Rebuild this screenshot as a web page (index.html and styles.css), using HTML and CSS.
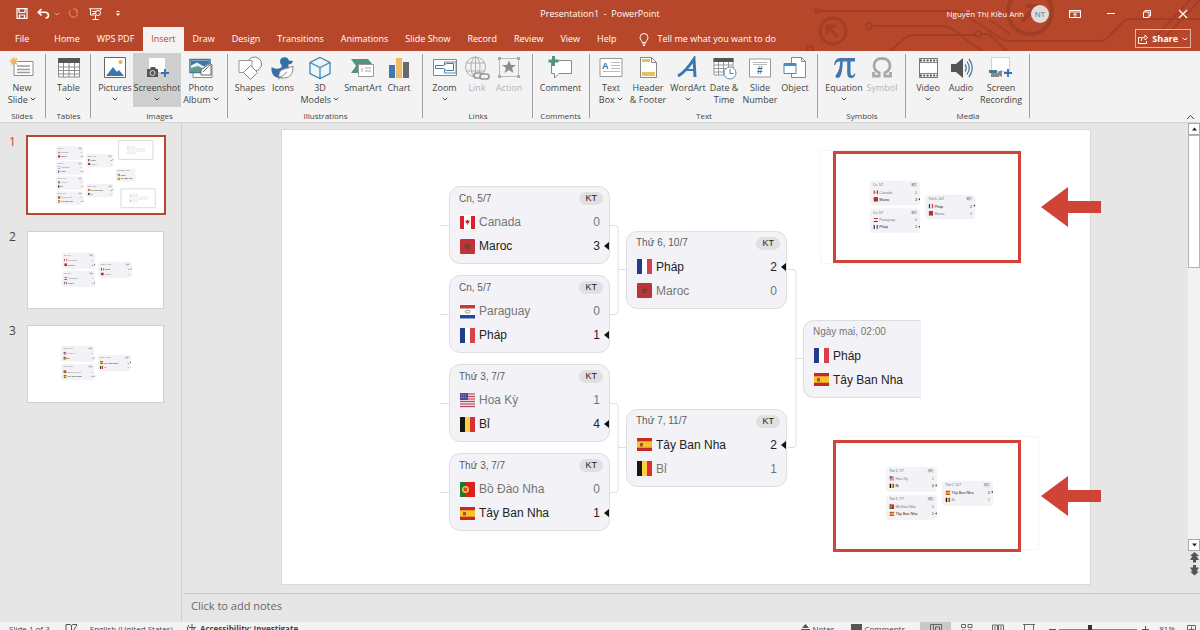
FILE: index.html
```html
<!DOCTYPE html>
<html lang="en">
<head>
<meta charset="utf-8">
<title>Presentation1 - PowerPoint</title>
<link rel="stylesheet" href="styles.css">
</head>
<body>
<svg class="defs" aria-hidden="true">
  <defs>
    <symbol id="fr" viewBox="0 0 15 15"><path fill="#fff" d="M0 0h15v15H0z"/><path fill="#1f3d8c" d="M0 0h5v15H0z"/><path fill="#d8404e" d="M10 0h5v15h-5z"/></symbol>
    <symbol id="ca" viewBox="0 0 15 15"><path fill="#fff" d="M0 0h15v15H0z"/><path fill="#d8232c" d="M0 1h4v13H0zM11 1h4v13h-4zM7.500 4.500l.9 1.200 1.300-.3-.4 2-1.500 1.300v1.300h-.6V8.700L5.700 7.400l-.4-2 1.300.3z"/></symbol>
    <symbol id="ma" viewBox="0 0 15 15"><rect width="15" height="15" rx="1" fill="#bd3338"/><path fill="none" stroke="#5c4a2e" d="M7.500 4.500l1.900 5.600-4.700-3.500h5.600l-4.700 3.500z"/></symbol>
    <symbol id="py" viewBox="0 0 15 15"><path fill="#fff" d="M0 0h15v15H0z"/><path fill="#c43a35" d="M0 1h15v3.500H0z"/><path fill="#1f4a9c" d="M0 11h15v3.500H0z"/><ellipse cx="7.500" cy="7.700" rx="2.300" ry="1.500" fill="none" stroke="#8b949b"/></symbol>
    <symbol id="us" viewBox="0 0 15 15"><path fill="#e8d5dc" d="M0 0h15v15H0z"/><path stroke="#b84a5c" stroke-width="1.200" d="M0 1h15M0 3.500h15M0 6h15M0 8.500h15M0 11h15M0 13.500h15"/><path fill="#4a4f8f" d="M0 0h8v7H0z"/><path stroke="#9a9fc8" stroke-dasharray="1 1" d="M1 2h6M1 4.500h6"/></symbol>
    <symbol id="be" viewBox="0 0 15 15"><path fill="#fbd23a" d="M0 0h15v15H0z"/><path fill="#1b1512" d="M0 0h5v15H0z"/><path fill="#dd2f33" d="M10 0h5v15h-5z"/></symbol>
    <symbol id="pt" viewBox="0 0 15 15"><path fill="#dd1f1d" d="M0 0h15v15H0z"/><path fill="#1d7a34" d="M0 0h5.500v15H0z"/><circle cx="5.500" cy="7.500" r="2.800" fill="#d84a2a" stroke="#f3d34a" stroke-width="1.300"/></symbol>
    <symbol id="es" viewBox="0 0 15 15"><path fill="#f6c22c" d="M0 1h15v13H0z"/><path fill="#c22a26" d="M0 1h15v3.300H0zM0 10.700h15V14H0z"/><path fill="#a9532a" d="M3 6h3v3.500H3z"/></symbol>

    <g id="mini-card">
      <rect x=".5" y=".5" width="160" height="77" rx="10" fill="#f3f3f7" stroke="#e9e9ee"/>
      <rect x="131" y="6" width="23" height="13" rx="6" fill="#e0e0e4"/>
      <text x="135" y="16" font-size="10" fill="#444">KT</text>
    </g>
    <g id="mini-win"><path fill="#222" d="M161 55v7l-5-3.500z"/></g>
    <g id="pair-a" font-family="Liberation Sans, sans-serif" font-size="12">
      <use href="#mini-card"/>
      <text x="10" y="16" font-size="10" fill="#666">Cn, 5/7</text>
      <use href="#ca" x="11" y="29" width="15" height="15"/><text x="30" y="41" fill="#777">Canada</text><text x="145" y="41" fill="#777">0</text>
      <use href="#ma" x="11" y="52" width="15" height="15"/><text x="30" y="64" fill="#222">Maroc</text><text x="145" y="64" fill="#222">3</text><use href="#mini-win"/>
      <g transform="translate(0 89)"><use href="#mini-card"/>
      <text x="10" y="16" font-size="10" fill="#666">Cn, 5/7</text>
      <use href="#py" x="11" y="29" width="15" height="15"/><text x="30" y="41" fill="#777">Paraguay</text><text x="145" y="41" fill="#777">0</text>
      <use href="#fr" x="11" y="52" width="15" height="15"/><text x="30" y="64" fill="#222">Pháp</text><text x="145" y="64" fill="#222">1</text><use href="#mini-win"/></g>
      <g transform="translate(178 45)"><use href="#mini-card"/>
      <text x="10" y="16" font-size="10" fill="#666">Thứ 6, 10/7</text>
      <use href="#fr" x="11" y="29" width="15" height="15"/><text x="30" y="41" fill="#222">Pháp</text><text x="145" y="41" fill="#222">2</text><use href="#mini-win" y="-24"/>
      <use href="#ma" x="11" y="52" width="15" height="15"/><text x="30" y="64" fill="#777">Maroc</text><text x="145" y="64" fill="#777">0</text></g>
    </g>
    <g id="pair-b" font-family="Liberation Sans, sans-serif" font-size="12">
      <use href="#mini-card"/>
      <text x="10" y="16" font-size="10" fill="#666">Thứ 3, 7/7</text>
      <use href="#us" x="11" y="29" width="15" height="15"/><text x="30" y="41" fill="#777">Hoa Kỳ</text><text x="145" y="41" fill="#777">1</text>
      <use href="#be" x="11" y="52" width="15" height="15"/><text x="30" y="64" fill="#222">Bỉ</text><text x="145" y="64" fill="#222">4</text><use href="#mini-win"/>
      <g transform="translate(0 89)"><use href="#mini-card"/>
      <text x="10" y="16" font-size="10" fill="#666">Thứ 3, 7/7</text>
      <use href="#pt" x="11" y="29" width="15" height="15"/><text x="30" y="41" fill="#777">Bồ Đào Nha</text><text x="145" y="41" fill="#777">0</text>
      <use href="#es" x="11" y="52" width="15" height="15"/><text x="30" y="64" fill="#222">Tây Ban Nha</text><text x="145" y="64" fill="#222">1</text><use href="#mini-win"/></g>
      <g transform="translate(178 45)"><use href="#mini-card"/>
      <text x="10" y="16" font-size="10" fill="#666">Thứ 7, 11/7</text>
      <use href="#es" x="11" y="29" width="15" height="15"/><text x="30" y="41" fill="#222">Tây Ban Nha</text><text x="145" y="41" fill="#222">2</text><use href="#mini-win" y="-24"/>
      <use href="#be" x="11" y="52" width="15" height="15"/><text x="30" y="64" fill="#777">Bỉ</text><text x="145" y="64" fill="#777">1</text></g>
    </g>
    <symbol id="caret" viewBox="0 0 6 4"><path fill="none" stroke="currentColor" d="M.7.8L3 3 5.300.8"/></symbol>
  </defs>
</svg>

<div class="app">
  <header class="top">
    <svg class="circuit" viewBox="0 0 400 51" aria-hidden="true" fill="none" stroke="#a33e26" stroke-width="2">
      <circle cx="17" cy="11" r="2"/><path d="M19 11h132M70 26h73q8 1 16 8l10 8q8 5 14 9M90 51l14-12q4-4 12-4h60"/>
      <circle cx="69" cy="26" r="3"/><circle cx="178" cy="34" r="3"/><circle cx="33" cy="31" r="13" stroke-width="3"/>
      <path stroke-width="3" d="M38 37L27 26M27 34v-8h9"/>
      <path d="M181 34h8l18 17M152 11q10 0 18 7l30 20q4 3 12 3h88q5 0 9-5l15-15q3-2 8-2h68M190 20l20 14M356 36l34-36M366 36l34-36"/>
      <circle cx="230" cy="12" r="22" stroke-width="4"/><path stroke-width="4" d="M222 21l14-14M226 6h11v10"/><circle cx="10" cy="49" r="3"/>
    </svg>
    <div class="titlebar">
      <div class="quick">
        <button aria-label="Save"><svg width="12" height="11" viewBox="0 0 12 11"><path fill="none" stroke="#fff" stroke-width="1.200" d="M1 .7h10v9.600H1zM3 1v3.500h6V1M3.500 10V7h5v3"/></svg></button>
        <button class="undo" aria-label="Undo"><svg width="13" height="11" viewBox="0 0 13 11"><path fill="none" stroke="#fff" stroke-width="1.600" d="M4.500 1L1.200 4.200l3.300 3.200M1.500 4.200h6.700q3.300.3 3.300 3T8.500 10"/></svg><svg width="6" height="4" class="pale"><use href="#caret"/></svg></button>
        <button class="redo" aria-label="Redo"><svg width="11" height="11" viewBox="0 0 11 11"><path fill="none" stroke="#ee6a50" stroke-width="1.500" d="M6 1.200h3.500v3.500M9 1.500A4.200 4.200 0 1 1 3.300 2.500"/></svg></button>
        <button aria-label="Start from beginning"><svg width="13" height="12" viewBox="0 0 13 12"><path fill="none" stroke="#fff" d="M0 .8h13M1.500 1v6h4M11.500 1v1.500M3.500 3.500h4M3.500 5.500h3M6.500 7v4M3.500 11.500h6"/><circle cx="9" cy="5" r="2.500" fill="none" stroke="#fff"/></svg></button>
        <button class="more" aria-label="Customize Quick Access Toolbar"><svg width="6" height="6" viewBox="0 0 6 6"><path fill="#fff" d="M1.500 0h3v1h-3zM.8 2.500h4.400L3 5z"/></svg></button>
      </div>
      <div class="doc">Presentation1 &nbsp;-&nbsp; PowerPoint</div>
      <div class="account">
        <span>Nguyễn Thị Kiều Anh</span><span class="avatar">NT</span>
        <button aria-label="Ribbon Display Options"><svg width="12" height="10" viewBox="0 0 12 10"><path fill="none" stroke="#fff" d="M.5 1.500h11v7H.5zM.5 3h11M6 8V4.500M4.200 6L6 4.300 7.800 6"/></svg></button>
        <button aria-label="Minimize"><svg width="10" height="10" viewBox="0 0 10 10"><path stroke="#fff" d="M1 4.500h8"/></svg></button>
        <button aria-label="Restore"><svg width="10" height="10" viewBox="0 0 10 10"><path fill="none" stroke="#fff" d="M1.500 3h5.500v5.500H1.500zM3 3V1.500h5.500V7H7"/></svg></button>
        <button aria-label="Close"><svg width="10" height="10" viewBox="0 0 10 10"><path stroke="#fff" stroke-width="1.200" d="M1 1l8 8M9 1L1 9"/></svg></button>
      </div>
    </div>
    <nav class="tabs">
      <button class="file">File</button><button>Home</button><button>WPS PDF</button><button class="on">Insert</button><button>Draw</button><button>Design</button><button>Transitions</button><button>Animations</button><button>Slide Show</button><button>Record</button><button>Review</button><button>View</button><button>Help</button>
      <button class="tell"><svg width="10" height="13" viewBox="0 0 10 13"><path fill="none" stroke="#fff" d="M3.200 9.500C3.200 7.500 1 7 1 4.500a4 4 0 0 1 8 0C9 7 6.800 7.500 6.800 9.500zM3.300 11h3.400M4 12.500h2"/></svg>Tell me what you want to do</button>
      <button class="share"><svg width="10" height="10" viewBox="0 0 10 10"><path fill="none" stroke="#fff" d="M3.500 3.500h-3v6h8V7M3 7q0-4 4-4V1l2.500 2.700L7 6V4.500"/></svg>Share<svg width="6" height="4"><use href="#caret"/></svg></button>
    </nav>
  </header>

  <section class="ribbon" aria-label="Insert">
    <div class="group g-slides"><div class="tools">
      <button><svg viewBox="0 0 26 24"><path fill="#fff" stroke="#8c8c8c" d="M5 5.500h19v14H5z"/><path stroke="#9c9c9c" stroke-width="1.500" d="M8 10h13M8 13.500h13M8 16.500h13"/><path stroke="#e9b660" stroke-width="1.300" d="M5 1v9M.5 5.500h9M2 2.500l6 6M8 2.500l-6 6"/></svg><span>New<br>Slide <svg class="c"><use href="#caret"/></svg></span></button></div><h2>Slides</h2></div>
    <div class="group g-tables"><div class="tools">
      <button><svg viewBox="0 0 26 24"><path fill="#fff" stroke="#8c8c8c" d="M2.500 3h21v18h-21zM2.500 11h21M2.500 14.500h21M2.500 18h21M7.500 7v14M13 7v14M18.500 7v14"/><path fill="#555" d="M2 2h22v5H2z"/></svg><span>Table<br><svg class="c"><use href="#caret"/></svg></span></button></div><h2>Tables</h2></div>
    <div class="group g-images"><div class="tools">
      <button><svg viewBox="0 0 26 24"><path fill="#fff" stroke="#666" d="M2.500 1.500h21v20h-21z"/><path fill="#3b75ad" d="M4 20l7-9 4 5 2-2 5 6z"/><circle cx="18.500" cy="6" r="2" fill="#e9b14e"/></svg><span>Pictures<br><svg class="c"><use href="#caret"/></svg></span></button>
      <button class="active"><svg viewBox="0 0 26 24"><path fill="#fff" d="M5 2h16v14H5z"/><path fill="#555" d="M3 13h3l1-2h4l1 2h2v8H3z"/><circle cx="8.500" cy="17" r="2.500" fill="#555" stroke="#ddd"/><path stroke="#2f72b5" stroke-width="1.800" d="M21 13v8M17 17h8"/></svg><span>Screenshot<br><svg class="c"><use href="#caret"/></svg></span></button>
      <button><svg viewBox="0 0 26 24"><path fill="#fff" stroke="#888" d="M5 8.500h19v13H5z"/><path fill="#e8f1f5" stroke="#4d7890" stroke-width="1.500" d="M2 3.500h20v13H2z"/><path fill="#3f78a8" d="M3 4.500h18v3l-5 3-7-4-6 3z"/><path fill="#5e9c8c" d="M3 12l7-2 6 3-2 3H3z"/><path fill="#fff" stroke="#666" d="M13 19v-5l8-6h2v11zM15 16l7-7"/></svg><span>Photo<br>Album <svg class="c"><use href="#caret"/></svg></span></button></div><h2>Images</h2></div>
    <div class="group g-illus"><div class="tools">
      <button><svg viewBox="0 0 26 24"><circle cx="17.500" cy="8" r="7" fill="#fff" stroke="#5f91ad"/><path fill="#fff" stroke="#999" d="M2 4.500h13v12H2z"/><path fill="#fff" stroke="#6a8aa0" d="M13.500 9.500l7 7-7 7-7-7z"/></svg><span>Shapes<br><svg class="c"><use href="#caret"/></svg></span></button>
      <button><svg viewBox="0 0 26 24"><path fill="#356fa8" d="M10 5.500A4.500 4.500 0 0 1 18.800 4.500L23 5q-.5 3-4.500 3.500-.7 2 1 3.500 2 2 1.500 4l-8 6q-5 1-9-2-3-3-2.500-9 3 2.500 7.500 1.500 3.500-1 2.500-3.500-1.500-1.500-1.500-3.500z"/><path fill="#fff" stroke="#8a8a8a" d="M9 21.500q-1-7 5-8.500 5-1 9-3 .5 11.500-8.500 12-3.500.5-4.500-1.500M8 23.500l9-7.500"/></svg><span>Icons</span></button>
      <button><svg viewBox="0 0 26 24"><path fill="#eef6fa" stroke="#3f87b5" stroke-width="1.300" d="M13 1.500l10 5v11l-10 5-10-5v-11zM3 6.500l10 5 10-5M13 11.500v11"/></svg><span>3D<br>Models <svg class="c"><use href="#caret"/></svg></span></button>
      <button><svg viewBox="0 0 26 24"><path fill="#4f9380" d="M1 3h17l5 6h-9v8H1l5-7z"/><path fill="#fff" stroke="#999" d="M8.500 8.500h15v12h-15z"/><path stroke="#c4c4c4" stroke-width="1.300" d="M11 13h2M15 12h6M15 15h6M11 15h2"/></svg><span>SmartArt</span></button>
      <button><svg viewBox="0 0 26 24"><path fill="#3f78b5" d="M3 9h6v13H3z"/><path fill="#edbc66" d="M10 2h6v20h-6z"/><path fill="#6a6a6a" d="M17 6h6v16h-6z"/></svg><span>Chart</span></button></div><h2>Illustrations</h2></div>
    <div class="group g-links"><div class="tools">
      <button><svg viewBox="0 0 26 24"><path fill="#fff" stroke="#888" d="M1.500 3.500h23v16h-23z"/><path fill="#fff" stroke="#5b8aac" d="M12.500 6h11.500v11H12.500z"/><path fill="#fff" stroke="#4a7898" d="M3.500 9.500h8l3-2h7v7h-7l-3-2h-8z"/></svg><span>Zoom<br><svg class="c"><use href="#caret"/></svg></span></button>
      <button disabled><svg viewBox="0 0 26 24"><g fill="none" stroke="#b0b0b0"><circle cx="11.500" cy="11" r="10"/><ellipse cx="11.500" cy="11" rx="4.500" ry="10"/><path d="M2 7h19M2 15h19M11.500 1v20"/></g><g fill="#f1f1f1" stroke="#989898" stroke-width="1.700"><rect x="10" y="17" width="9" height="5" rx="2.500"/><rect x="16" y="18" width="9" height="5" rx="2.500"/></g></svg><span>Link</span></button>
      <button disabled><svg viewBox="0 0 26 24"><path fill="none" stroke="#bbb" d="M3.500 2.500h19v18h-19z"/><path fill="#aaa" d="M2 1h3v3H2zM21 1h3v3h-3zM2 19h3v3H2zM21 19h3v3h-3z"/><path fill="#8c8c8c" d="M13 4.500l2 4.500h5l-4 3 1.500 5-4.500-3-4.500 3 1.500-5-4-3h5z"/></svg><span>Action</span></button></div><h2>Links</h2></div>
    <div class="group g-comments"><div class="tools">
      <button><svg viewBox="0 0 26 24"><path fill="#fff" stroke="#888" d="M3.500 4.500h20v13H11l-4.500 4.500v-4.500h-3z"/><path stroke="#4f9380" stroke-width="3" d="M5.500 0v10M.5 5h10"/></svg><span>Comment</span></button></div><h2>Comments</h2></div>
    <div class="group g-text"><div class="tools">
      <button><svg viewBox="0 0 26 24"><path fill="#fff" stroke="#999" d="M2 2.500h22v18H2z"/><text class="glyph" x="4" y="13" font-size="9" font-weight="700" fill="#3a6f9f">A</text><path stroke="#bbb" d="M13 6.500h9M13 9.500h9M13 12.500h9M5 15.500h17"/></svg><span>Text<br>Box <svg class="c"><use href="#caret"/></svg></span></button>
      <button><svg viewBox="0 0 26 24"><path fill="#fff" stroke="#888" d="M5.500 1.500h11l5 5v15h-16z"/><path fill="none" stroke="#888" d="M16.500 2v4.500h5"/><path fill="#edbd62" d="M7 3h8v3H7zM7 16h13v4H7z"/></svg><span>Header<br>&amp; Footer</span></button>
      <button><svg viewBox="0 0 26 24"><path fill="none" stroke="#3a76b8" stroke-width="3" d="M3 20C9 17 15 9 19 3l1 18"/><path stroke="#3a76b8" stroke-width="2" d="M9 14h11"/></svg><span>WordArt<br><svg class="c"><use href="#caret"/></svg></span></button>
      <button><svg viewBox="0 0 26 24"><path fill="#fff" stroke="#999" d="M3 3h19v16H3zM3 9h19M3 12.500h19M3 16h19M7.500 6v13M12.500 6v13M17.500 6v13"/><path fill="#555" d="M2.500 2h20v4h-20z"/><circle cx="19" cy="17" r="6" fill="#fff" stroke="#6090b5"/><path fill="none" stroke="#4f7ea6" d="M19 13v4.500h3.500"/></svg><span>Date &amp;<br>Time</span></button>
      <button><svg viewBox="0 0 26 24"><path fill="#fff" stroke="#999" d="M2.500 3h21v18h-21z"/><path stroke="#bbb" d="M6 6.500h14M6 8.500h14"/><text class="glyph" x="10" y="18" font-size="10" fill="#3a6f9f" font-weight="700">#</text></svg><span>Slide<br>Number</span></button>
      <button><svg viewBox="0 0 26 24"><path fill="#fff" stroke="#888" d="M9.500 1.500h10l4 4v16h-14zM19.500 1.500v4h4"/><path fill="#fff" stroke="#4f8ab5" d="M2 7.500h12v10H2z"/><path fill="#4f8ab5" d="M2 7h12v3H2z"/></svg><span>Object</span></button></div><h2>Text</h2></div>
    <div class="group g-symbols"><div class="tools">
      <button><svg viewBox="0 0 26 24"><path fill="#3f78b0" d="M3 9q1-7 6-7h15v3.500h-4.500v11q0 3 2 3 1.500 0 1.500-2h1.200q0 4.500-4 4.500-4 0-4-5V5.500h-4.400Q11.500 15 9.500 20q-1 2-3 2-2 0-2-2 0-1 1.500-2.500Q9 13 9.200 5.500 5 5 4.300 9z"/></svg><span>Equation<br><svg class="c"><use href="#caret"/></svg></span></button>
      <button disabled><svg viewBox="0 0 26 24"><path fill="none" stroke="#a8a8a8" stroke-width="2.700" d="M4.500 16v4.200h5.700v-3.400Q5 14.500 5 9.500 5.500 2.500 13 2.300q7.500.2 8 7.200 0 5-5.200 7.300v3.400h5.700V16"/></svg><span>Symbol</span></button></div><h2>Symbols</h2></div>
    <div class="group g-media"><div class="tools">
      <button><svg viewBox="0 0 26 24"><path fill="#fff" stroke="#777" d="M4.500 2.500h18v19h-18z"/><path stroke="#555" stroke-width="2" stroke-dasharray="2 1.300" d="M5 4.500h17M5 19.500h17"/><path stroke="#888" d="M4.500 6.500h18M4.500 17.500h18"/></svg><span>Video<br><svg class="c"><use href="#caret"/></svg></span></button>
      <button><svg viewBox="0 0 26 24"><path fill="#555" d="M3 8h5l7-6v20l-7-6H3z"/><path fill="none" stroke="#4a7da3" stroke-width="1.300" d="M17 8.500q2.500 3.500 0 7M19 5.500q4.500 6.500 0 13M21 3q6.500 9 0 18"/></svg><span>Audio<br><svg class="c"><use href="#caret"/></svg></span></button>
      <button><svg viewBox="0 0 26 24"><path fill="#fff" stroke="#aaa" stroke-dasharray="1 1" d="M3.500 1.500h18v14h-18z"/><path fill="#4a7898" d="M1 14h8v3H1z"/><path fill="#888" d="M3 17h8v4H3zM10 16l4-2v7l-4-2z"/><path stroke="#2f72b5" stroke-width="1.800" d="M20 13v8M16 17h8"/></svg><span>Screen<br>Recording</span></button></div><h2>Media</h2></div>
    <button class="collapse" aria-label="Collapse the Ribbon"><svg width="9" height="6" viewBox="0 0 9 6"><path fill="none" stroke="#444" d="M1 5l3.500-3.500L8 5"/></svg></button>
  </section>

  <main class="work">
    <aside class="thumbs" aria-label="Slides">
      <div class="thumb selected"><span>1</span>
        <svg viewBox="0 0 808 454" role="img" aria-label="Slide 1">
          <use href="#pair-a" x="167" y="56"/><use href="#pair-b" x="167" y="234"/>
          <g transform="translate(521 188)" font-family="Liberation Sans, sans-serif" font-size="12"><path fill="#f3f3f7" d="M10 0h108v78H10Q0 78 0 68V10Q0 0 10 0"/><text x="10" y="16" font-size="10" fill="#666">Ngày mai, 02:00</text><use href="#fr" x="11" y="29" width="15" height="15"/><text x="30" y="41">Pháp</text><use href="#es" x="11" y="52" width="15" height="15"/><text x="30" y="64">Tây Ban Nha</text></g>
          <path fill="#fff" stroke="#d4d4d4" stroke-width="5" d="M538 21h204v112H538zM552 308h204v112H552z"/>
          <use href="#pair-a" transform="translate(588 51) scale(.31)"/><use href="#pair-b" transform="translate(604 337) scale(.31)"/>
        </svg></div>
      <div class="thumb"><span>2</span><svg viewBox="0 0 808 454" role="img" aria-label="Slide 2"><use href="#pair-a" transform="translate(203 123) scale(1.230)"/></svg></div>
      <div class="thumb"><span>3</span><svg viewBox="0 0 808 454" role="img" aria-label="Slide 3"><use href="#pair-b" transform="translate(199 119) scale(1.230)"/></svg></div>
    </aside>

    <div class="editor">
      <div class="stage">
        <div class="slide">
          <div class="bracket">
            <svg class="lines" width="376" height="345" viewBox="0 0 376 345" fill="none" stroke="#dfdfdf" aria-hidden="true"><path d="M0 39.500h10M0 128.500h10M0 217.500h10M0 306.500h10M170 39.500h5q3 0 3 3v83q0 3-3 3h-5M178 83.500h9M170 217.500h5q3 0 3 3v83q0 3-3 3h-5M178 261.500h9M348 83.500h5q3 0 3 3v172q0 3-3 3h-5M356 172.500h9"/></svg>
            <div class="round">
              <article class="card"><header>Cn, 5/7<b>KT</b></header><p><svg><use href="#ca"/></svg>Canada<i>0</i></p><p class="won"><svg><use href="#ma"/></svg>Maroc<i>3</i></p></article>
              <article class="card"><header>Cn, 5/7<b>KT</b></header><p><svg><use href="#py"/></svg>Paraguay<i>0</i></p><p class="won"><svg><use href="#fr"/></svg>Pháp<i>1</i></p></article>
              <article class="card"><header>Thứ 3, 7/7<b>KT</b></header><p><svg><use href="#us"/></svg>Hoa Kỳ<i>1</i></p><p class="won"><svg><use href="#be"/></svg>Bỉ<i>4</i></p></article>
              <article class="card"><header>Thứ 3, 7/7<b>KT</b></header><p><svg><use href="#pt"/></svg>Bồ Đào Nha<i>0</i></p><p class="won"><svg><use href="#es"/></svg>Tây Ban Nha<i>1</i></p></article>
            </div>
            <div class="round">
              <article class="card"><header>Thứ 6, 10/7<b>KT</b></header><p class="won"><svg><use href="#fr"/></svg>Pháp<i>2</i></p><p><svg><use href="#ma"/></svg>Maroc<i>0</i></p></article>
              <article class="card"><header>Thứ 7, 11/7<b>KT</b></header><p class="won"><svg><use href="#es"/></svg>Tây Ban Nha<i>2</i></p><p><svg><use href="#be"/></svg>Bỉ<i>1</i></p></article>
            </div>
            <div class="round">
              <article class="card next"><header>Ngày mai, 02:00</header><p class="team"><svg><use href="#fr"/></svg>Pháp</p><p class="team"><svg><use href="#es"/></svg>Tây Ban Nha</p></article>
            </div>
          </div>
          <div class="ghost ghost-a"></div><div class="ghost ghost-b"></div>
          <svg class="mark mark-a" viewBox="0 0 182 106" role="img" aria-label="Slide 2 zoom"><use href="#pair-a" transform="translate(34 27) scale(.31)"/></svg>
          <svg class="mark mark-b" viewBox="0 0 182 106" role="img" aria-label="Slide 3 zoom"><use href="#pair-b" transform="translate(50 24) scale(.315)"/></svg>
          <svg class="arrow arrow-a" viewBox="0 0 60 40"><path fill="#d04437" d="M0 20L27 0v14h33v12H27v14z"/></svg>
          <svg class="arrow arrow-b" viewBox="0 0 60 40"><path fill="#d04437" d="M0 20L27 0v14h33v12H27v14z"/></svg>
        </div>
        <div class="scroll">
          <button aria-label="Scroll up"><svg width="5" height="4" viewBox="0 0 5 4"><path fill="#222" d="M0 3.500h5L2.500.5z"/></svg></button>
          <div class="track"><div class="bar"></div></div>
          <button aria-label="Scroll down"><svg width="5" height="4" viewBox="0 0 5 4"><path fill="#222" d="M0 .5h5L2.500 3.500z"/></svg></button>
          <button class="jump" aria-label="Previous slide"><svg width="9" height="11" viewBox="0 0 9 11"><path fill="#555" d="M4.500 0L9 4H6.500l2.500 4H6v2.500H3V8H0l2.500-4H0z"/></svg></button>
          <button class="jump" aria-label="Next slide"><svg width="9" height="11" viewBox="0 0 9 11"><path fill="#555" d="M4.500 10.500L9 6.500H6.500L9 2.500H6V0H3v2.500H0l2.500 4H0z"/></svg></button>
        </div>
      </div>
      <input class="notes" type="text" aria-label="Notes" placeholder="Click to add notes">
    </div>
  </main>

  <footer class="status">
    <span class="count">Slide 1 of 3</span>
    <button aria-label="Spelling"><svg width="13" height="12" viewBox="0 0 13 12"><path fill="none" stroke="#555" d="M6.500 2.500V11H1V1.500h4zL8 1.500h4M6 6l2 2 4-6"/></svg></button>
    <button class="lang">English (United States)</button>
    <button class="access"><svg width="11" height="12" viewBox="0 0 11 12"><path fill="none" stroke="#555" d="M3 2Q0 5 2 8M6 1v9M3 4.500h7M8 5v4"/></svg>Accessibility: Investigate</button>
    <button class="push"><svg width="9" height="10" viewBox="0 0 9 10"><path fill="#555" d="M4.500 0L8 4H1zM0 5h9v1.200H0z"/></svg>Notes</button>
    <button class="cmts"><svg width="11" height="10" viewBox="0 0 11 10"><path fill="#555" d="M0 0h11v8H5l-3 2V8H0z"/></svg>Comments</button>
    <button class="view sel" aria-label="Normal"><svg width="12" height="10" viewBox="0 0 12 10"><path fill="none" stroke="#666" d="M.5.500h11v9H.5zM3.500.500v9M5.500 3h4v4h-4z"/></svg></button>
    <button class="view" aria-label="Slide Sorter"><svg width="12" height="10" viewBox="0 0 12 10"><path fill="none" stroke="#666" d="M.5.500h4v3h-4zM7 .500h4v3H7zM.5 6h4v3h-4zM7 6h4v3H7z"/></svg></button>
    <button class="view" aria-label="Reading View"><svg width="12" height="10" viewBox="0 0 12 10"><path fill="none" stroke="#666" d="M.5 1h5v8h-5zM6.500 1h5v8h-5zM2 3h2M2 5h2M8 3h2M8 5h2"/></svg></button>
    <button class="view" aria-label="Slide Show"><svg width="12" height="10" viewBox="0 0 12 10"><path fill="none" stroke="#666" d="M0 .500h12M1.500 1v6h9V1M4 9.500h4M6 7v3"/></svg></button>
    <button class="step" aria-label="Zoom out"><svg width="7" height="7" viewBox="0 0 7 7"><path stroke="#555" d="M0 3.500h7"/></svg></button>
    <input class="zoom" type="range" min="10" max="190" value="81" aria-label="Zoom">
    <button class="step" aria-label="Zoom in"><svg width="7" height="7" viewBox="0 0 7 7"><path stroke="#555" d="M0 3.500h7M3.500 0v7"/></svg></button>
    <button class="pct">81%</button>
    <button class="fit" aria-label="Fit slide to window"><svg width="9" height="9" viewBox="0 0 9 9"><path fill="none" stroke="#666" d="M.5.500h8v8h-8zM4.500 1.500v6M1.500 4.500h6"/></svg></button>
  </footer>
</div>
</body>
</html>
```
FILE: styles.css
```css
* { box-sizing: border-box; }
body { margin: 0; font: 9px/12px "Open Sans", "Noto Sans", sans-serif; color: #444; background: #e6e6e6; }
button { font: inherit; color: inherit; background: none; border: 0; padding: 0; }
svg { display: block; flex: none; }
.defs { position: absolute; width: 0; height: 0; }
.app { height: 100vh; overflow: hidden; display: flex; flex-direction: column; }

/* title bar and tabs */
.top { flex: none; position: relative; background: #b7472a; color: #fff; }
.circuit { position: absolute; right: 0; top: 0; width: 400px; height: 51px; }
.titlebar { position: relative; display: grid; grid-template-columns: 1fr auto 1fr; align-items: center; height: 27px; }
.quick { display: flex; align-items: center; padding-left: 16px; }
.quick .undo { display: flex; align-items: center; gap: 4px; margin-left: 9px; }
.quick .redo { margin: 0 11px 0 7px; }
.quick .more { margin-left: 13px; }
.pale { color: #e8a690; }
.account { display: flex; align-items: center; justify-content: flex-end; padding-right: 12px; font-size: 8px; }
.avatar { width: 18px; height: 18px; border-radius: 50%; background: #e0dcdc; color: #667; line-height: 18px; text-align: center; margin-left: 7px; }
.account button { margin-left: 26px; }
.account .avatar + button { margin-left: 20px; }
.account button + button:nth-of-type(2) { margin-left: 25px; }
.tabs { position: relative; display: flex; gap: 1px; height: 24px; padding: 0 9px 0 7px; }
.tabs button { padding: 0 8px; }
.tabs .on { background: #f4f4f4; color: #b7472a; }
.tabs .file { margin-right: 8px; }
.tabs .tell { display: flex; align-items: center; gap: 9px; margin-left: 5px; }
.tabs .share { display: flex; align-items: center; gap: 4px; margin: 2px 0 3px auto; padding: 0 2px; border: 1px solid #e8b3a5; font-weight: 700; }

/* ribbon */
.ribbon { flex: none; display: flex; background: #f3f3f3; height: 72px; padding-top: 2px; border-bottom: 1px solid #d5d5d5; color: #444; }
.group { flex: none; position: relative; padding: 0 6px; }
.group::after { content: ""; position: absolute; right: 0; top: 1px; bottom: 4px; width: 1px; background: #a0a0a0; }
.tools { display: grid; height: 54px; }
.tools button { display: flex; flex-direction: column; align-items: center; padding-top: 3px; white-space: nowrap; }
.tools button > svg { width: 26px; height: 24px; }
.tools span { margin-top: 2px; text-align: center; display: block; }
.tools .active { background: #cfcfcf; }
.tools button:disabled { color: #b4b4b4; }
.c { display: inline-block; width: 6px; height: 4px; vertical-align: 2px; }
.group h2 { margin: 3px 0 0; font: inherit; font-size: 8px; text-align: center; }
.glyph { font-family: "Liberation Sans", sans-serif; }
.g-slides { width: 46px; padding: 0 2px 0 0; }
.g-tables { width: 45px; padding: 0; }
.g-images { width: 137px; }
.g-images .tools { grid-template-columns: 36px 48px 40px; }
.g-illus { width: 195px; padding: 0 5px; }
.g-illus .tools { grid-template-columns: 34px 32px 42px 44px 28px; }
.g-links { width: 110px; padding: 0 5px; }
.g-links .tools { grid-template-columns: 33px 32px 32px; }
.g-comments { width: 57px; padding: 0 2px 0 0; }
.g-text { width: 228px; padding: 0 5px; }
.g-text .tools { grid-template-columns: 32px 42px 38px 34px 38px 32px; }
.g-symbols { width: 88px; padding: 0 5px; }
.g-symbols .tools { grid-template-columns: 42px 34px; }
.g-media { width: 124px; }
.g-media .tools { grid-template-columns: 32px 34px 46px; }
.collapse { margin-left: auto; align-self: flex-end; padding: 0 5px 2px 0; }

/* slide list */
.work { flex: 1; min-height: 0; display: flex; }
.thumbs { flex: none; width: 182px; border-right: 1px solid #cfcfcf; padding: 13px 16px 0 9px; display: flex; flex-direction: column; gap: 16px; }
.thumb { display: flex; align-items: flex-start; font-size: 12px; }
.thumb span { width: 17px; }
.thumb svg { flex: 1; min-width: 0; background: #fff; border: 1px solid #cfcfcf; margin: 0 1px; }
.selected { color: #c4452c; }
.selected svg { border: 2px solid #b9472e; margin: -1px -1px 0 0; }

/* editing area */
.editor { flex: 1; min-width: 0; display: flex; flex-direction: column; }
.stage { flex: 1; min-height: 0; display: flex; }
.slide { position: relative; width: 810px; aspect-ratio: 16 / 9; flex: none; margin: 6px 97px 0 auto; background: #fff; border: 1px solid #d9d9d9; align-self: flex-start; }
.bracket { position: relative; display: flex; gap: 16px; padding: 56px 0 0 167px; }
.lines { position: absolute; left: 158px; top: 56px; }
.round { position: relative; display: flex; flex-direction: column; justify-content: space-around; gap: 11px; }
.card { width: 161px; height: 78px; border: 1px solid #dedee2; border-radius: 11px; background: #f3f3f7; font: 12px/24px "Liberation Sans", sans-serif; color: #757575; }
.card header { display: flex; justify-content: space-between; align-items: center; height: 23px; padding: 0 6px 0 9px; font-size: 10px; color: #5c5c5c; }
.card b { padding: 0 6px; font-size: 9px; line-height: 13px; border-radius: 7px; background: #e0e0e3; font-weight: 400; color: #222; }
.card p { display: flex; align-items: center; margin: 0; height: 24px; padding: 0 9px 0 10px; }
.card p svg { width: 15px; height: 15px; margin-right: 4px; }
.card i { margin-left: auto; font-style: normal; }
.card .won, .card .team { color: #222; }
.card .won { position: relative; }
.card .won::after { content: ""; position: absolute; right: 0; top: 8px; border: 4px solid transparent; border-right: 5px solid #111; border-left: 0; }
.card.next { width: 118px; border-right: 0; border-radius: 11px 0 0 11px; }
.card.next header { color: #757575; }
.ghost { position: absolute; border: 1px solid #f6f6f6; width: 201px; height: 114px; }
.ghost-a { left: 538px; top: 20px; }
.ghost-b { left: 556px; top: 306px; }
.mark { position: absolute; left: 551px; width: 188px; height: 112px; border: 3px solid #d04437; background: #fff; overflow: visible; }
.mark-a { top: 21px; }
.mark-b { top: 310px; }
.arrow { position: absolute; left: 759px; width: 60px; height: 40px; }
.arrow-a { top: 57px; }
.arrow-b { top: 346px; }

.scroll { flex: none; width: 12px; display: flex; flex-direction: column; padding-bottom: 16px; }
.scroll button { height: 12px; border: 1px solid #aaa; background: #fff; display: flex; align-items: center; justify-content: center; }
.scroll .jump { border: 0; background: none; height: 13px; }
.track { flex: 1; background: #f2f2f2; }
.bar { height: 33%; background: #fff; border: 1px solid #b5b5b5; }
.notes { flex: none; height: 29px; border: 0; border-top: 1px solid #c8c8c8; margin-left: 2px; padding: 0 7px 6px; background: transparent; font: 11px/16px "Open Sans", sans-serif; border-radius: 0; }
.notes::placeholder { color: #666; }

/* status bar: its lower half lies below the window edge */
.status { flex: none; display: flex; align-items: center; height: 14px; margin-bottom: -6px; padding: 0 4px 0 9px; background: #f3f3f3; font-size: 8px; color: #444; }
.status button { display: flex; align-items: center; gap: 3px; }
.count { margin-right: 15px; }
.lang { margin-left: 12px; }
.access { margin-left: 13px; font-weight: 700; }
.status .push { margin-left: auto; }
.cmts { margin: 0 15px 0 16px; }
.status .view { width: 31px; height: 14px; justify-content: center; }
.status .sel { background: #c9c9c9; }
.step { margin-left: 5px; }
.zoom { appearance: none; width: 78px; height: 10px; margin: 0 0 0 3px; background: linear-gradient(#888, #888) center / 100% 1px no-repeat; }
.zoom::-webkit-slider-thumb { appearance: none; width: 4px; height: 9px; background: #333; }
.pct { margin: 0 12px 0 10px; }
```
